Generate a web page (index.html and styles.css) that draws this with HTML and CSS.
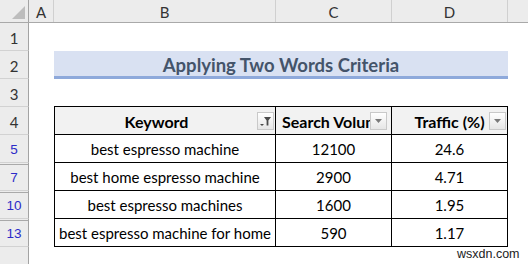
FILE: index.html
```html
<!DOCTYPE html>
<html>
<head>
<meta charset="utf-8">
<link rel="stylesheet" href="styles.css">
</head>
<body>
<div class="sheet">
  <div class="row hdr">
    <div class="rh corner"><span class="tri"></span></div>
    <div class="ch ca">A</div>
    <div class="ch cb">B</div>
    <div class="ch cc">C</div>
    <div class="ch cd">D</div>
    <div class="ch ce"></div>
  </div>
  <div class="row">
    <div class="rh">1</div>
  </div>
  <div class="row">
    <div class="rh">2</div>
    <div class="ca"></div>
    <div class="title">Applying Two Words Criteria</div>
  </div>
  <div class="row">
    <div class="rh">3</div>
  </div>
  <div class="row">
    <div class="rh">4</div>
    <div class="ca"></div>
    <div class="tc th cb first k">Keyword
      <span class="fbtn"><svg width="13" height="13" viewBox="0 0 13 13"><path d="M5 2h7l-2.6 3.4v5.2h-1.8V5.4z" fill="#4a4a4a"/><path d="M1 9h4l-2 2z" fill="#4a4a4a"/></svg></span>
    </div>
    <div class="tc th cc sv"><span class="clip">Search Volume</span>
      <span class="fbtn"><svg width="7" height="4" viewBox="0 0 7 4"><path d="M0 0h7l-3.5 4z" fill="#7a7a7a"/></svg></span>
    </div>
    <div class="tc th cd tr">Traffic (%)
      <span class="fbtn"><svg width="7" height="4" viewBox="0 0 7 4"><path d="M0 0h7l-3.5 4z" fill="#7a7a7a"/></svg></span>
    </div>
  </div>
  <div class="row">
    <div class="rh blue">5</div>
    <div class="ca"></div>
    <div class="tc cb first">best espresso machine</div>
    <div class="tc cc">12100</div>
    <div class="tc cd">24.6</div>
  </div>
  <div class="row">
    <div class="rh blue gap">7</div>
    <div class="ca"></div>
    <div class="tc cb first">best home espresso machine</div>
    <div class="tc cc">2900</div>
    <div class="tc cd">4.71</div>
  </div>
  <div class="row">
    <div class="rh blue gap">10</div>
    <div class="ca"></div>
    <div class="tc cb first">best espresso machines</div>
    <div class="tc cc">1600</div>
    <div class="tc cd">1.95</div>
  </div>
  <div class="row">
    <div class="rh blue gap">13</div>
    <div class="ca"></div>
    <div class="tc cb first">best espresso machine for home</div>
    <div class="tc cc">590</div>
    <div class="tc cd">1.17</div>
  </div>
  <div class="row last">
    <div class="rh"></div>
  </div>
  <div class="watermark">wsxdn.com</div>
</div>
</body>
</html>
```
FILE: styles.css
```css
* { box-sizing: border-box; }
html, body { margin: 0; padding: 0; background: #fff; }
body { width: 528px; height: 264px; overflow: hidden; font-family: Lato, "Open Sans", sans-serif; color: #000; }
.sheet { position: relative; width: 528px; height: 264px; }
.row { display: flex; height: 28px; }
.row.hdr { height: 23px; background: #ececec; border-bottom: 1px solid #a9a9a9; }
.row.last { height: 17px; }
.rh { width: 29px; flex: none; background: #ececec; border-right: 1px solid #a3a3a3; border-bottom: 1px solid #d2d2d2; display: flex; align-items: center; justify-content: center; font-size: 15px; color: #333; padding-top: 2px; }
.row.last .rh { border-bottom: none; }
.rh.blue { color: #2b2bc8; font-family: "Liberation Sans", Arial, sans-serif; font-size: 13.5px; }
.rh.gap { box-shadow: inset 0 1px 0 #ececec, inset 0 2px 0 #a9a9a9; }
.corner { position: relative; border-bottom: none; }
.corner .tri { position: absolute; right: 3px; bottom: 3px; width: 0; height: 0; border-left: 13px solid transparent; border-bottom: 13px solid #bdbdbd; }
.ch { flex: none; display: flex; align-items: center; justify-content: center; font-size: 15px; color: #333; border-right: 1px solid #d0d0d0; padding-top: 1px; }
.ca { width: 25px; flex: none; }
.cb { width: 222px; flex: none; }
.cc { width: 116px; flex: none; }
.cd { width: 116px; flex: none; }
.ce { flex: 1; border-right: none; }
.title { width: 454px; flex: none; background: #d9e1f2; border-bottom: 3px solid #8ea9db; display: flex; align-items: center; justify-content: center; font-weight: 700; font-size: 18.5px; color: #44546a; padding-top: 3px; }
.tc { position: relative; display: flex; align-items: center; justify-content: center; font-size: 15px; border-right: 1px solid #000; border-bottom: 1px solid #000; white-space: nowrap; overflow: hidden; padding-top: 1px; }
.tc.first { border-left: 1px solid #000; }
.th { border-top: 1px solid #000; background: #f2f2f2; font-weight: 700; font-size: 16px; height: 29px; margin-top: -1px; }
.th.k { padding-right: 17px; }
.th.sv { justify-content: flex-start; padding-left: 6px; }
.th.sv .clip { display: block; width: 89px; overflow: hidden; }
.th.tr { padding-right: 0; }
.fbtn { position: absolute; right: 4px; top: 5px; width: 17px; height: 18px; border: 1px solid #c9c9c9; background: linear-gradient(#ffffff, #e6e6e6); display: flex; align-items: center; justify-content: center; }
.k .fbtn { right: 1px; }
.tr .fbtn { right: 1px; }
.watermark { position: absolute; left: 456px; top: 247px; font-family: "Liberation Sans", Arial, sans-serif; font-size: 12.5px; color: #222; background: #fff; padding: 0 1px; }
```
